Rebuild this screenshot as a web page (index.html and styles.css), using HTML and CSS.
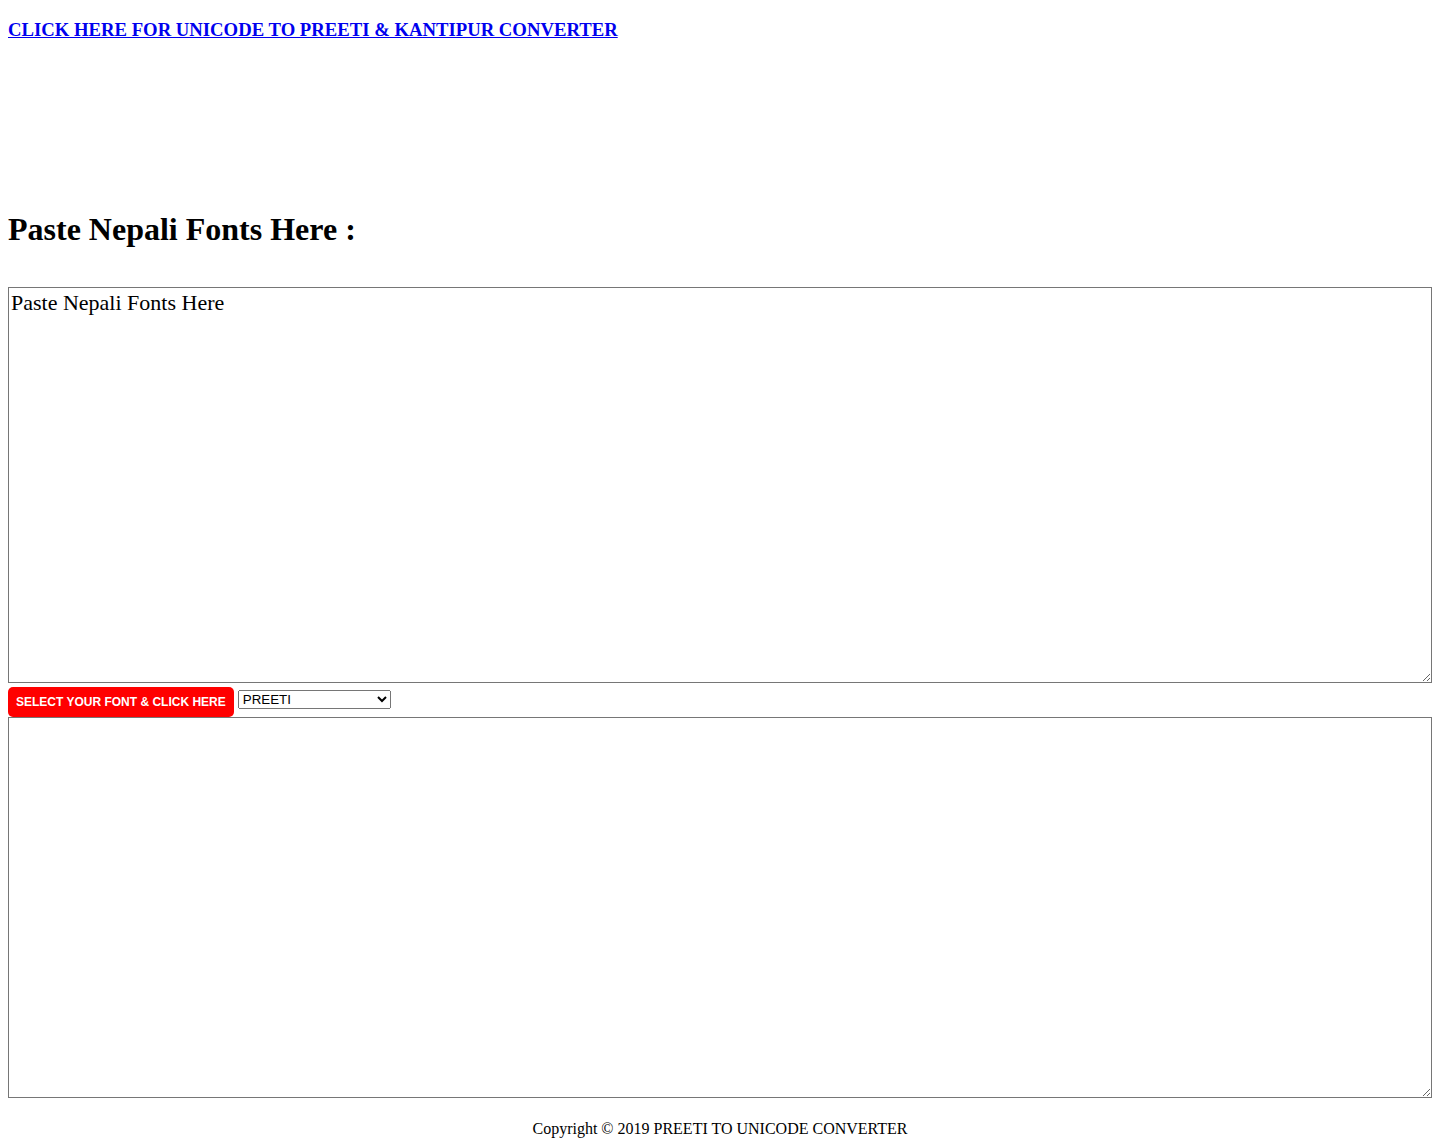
FILE: index.html
```html
<!DOCTYPE html>
<html>
<head>
<meta charset="utf-8">
<title>Preeti to Unicode Converter</title>
<link rel="stylesheet" href="styles.css">
</head>
<body>
<h3 class="top-link"><a href="#">CLICK HERE FOR UNICODE TO PREETI &amp; KANTIPUR CONVERTER</a></h3>
<div class="ad-space"></div>
<h1 class="title">Paste Nepali Fonts Here :</h1>
<div class="editor">
<textarea class="box box-in">Paste Nepali Fonts Here</textarea>
<div class="controls">
<button class="convert">SELECT YOUR FONT &amp; CLICK HERE</button>
<select class="font-select"><option>PREETI</option><option>KANTIPUR</option></select>
</div>
<textarea class="box box-out"></textarea>
</div>
<p class="copyright">Copyright © 2019 PREETI TO UNICODE CONVERTER</p>
</body>
</html>
```

FILE: styles.css
```css
html {
  overflow: hidden;
}
body {
  margin: 8px;
  font-family: "Liberation Serif", "Times New Roman", serif;
  background: #fff;
  color: #000;
}
.top-link {
  font-size: 18.72px;
  margin: 10.72px 0 18.72px;
}
.top-link a {
  color: #0000ee;
}
.ad-space {
  height: 130px;
}
.title {
  font-size: 32px;
  margin: 21.44px 0;
}
.editor {
  margin-top: 39px;
}
.box {
  display: block;
  width: 1418px;
  padding: 2px;
  border: 1px solid #767676;
  font-family: "Liberation Serif", "Times New Roman", serif;
  font-size: 22px;
  margin: 0;
  resize: vertical;
  box-sizing: content-box;
}
.box-in {
  height: 390px;
}
.box-out {
  height: 375px;
}
.controls {
  display: flex;
  align-items: center;
  gap: 4px;
  padding: 4px 0 0;
}
.convert {
  background: #ff0000;
  color: #fff;
  border: none;
  border-radius: 5px;
  font-family: "Liberation Sans", Arial, sans-serif;
  font-weight: bold;
  font-size: 12px;
  height: 30px;
  padding: 0 8px;
}
.font-select {
  width: 153px;
  height: 19px;
  font-family: "Liberation Sans", Arial, sans-serif;
  font-size: 13.33px;
  margin-top: -4px;
}
.copyright {
  text-align: center;
  font-size: 16px;
  margin: 22px 0 0;
}
```
